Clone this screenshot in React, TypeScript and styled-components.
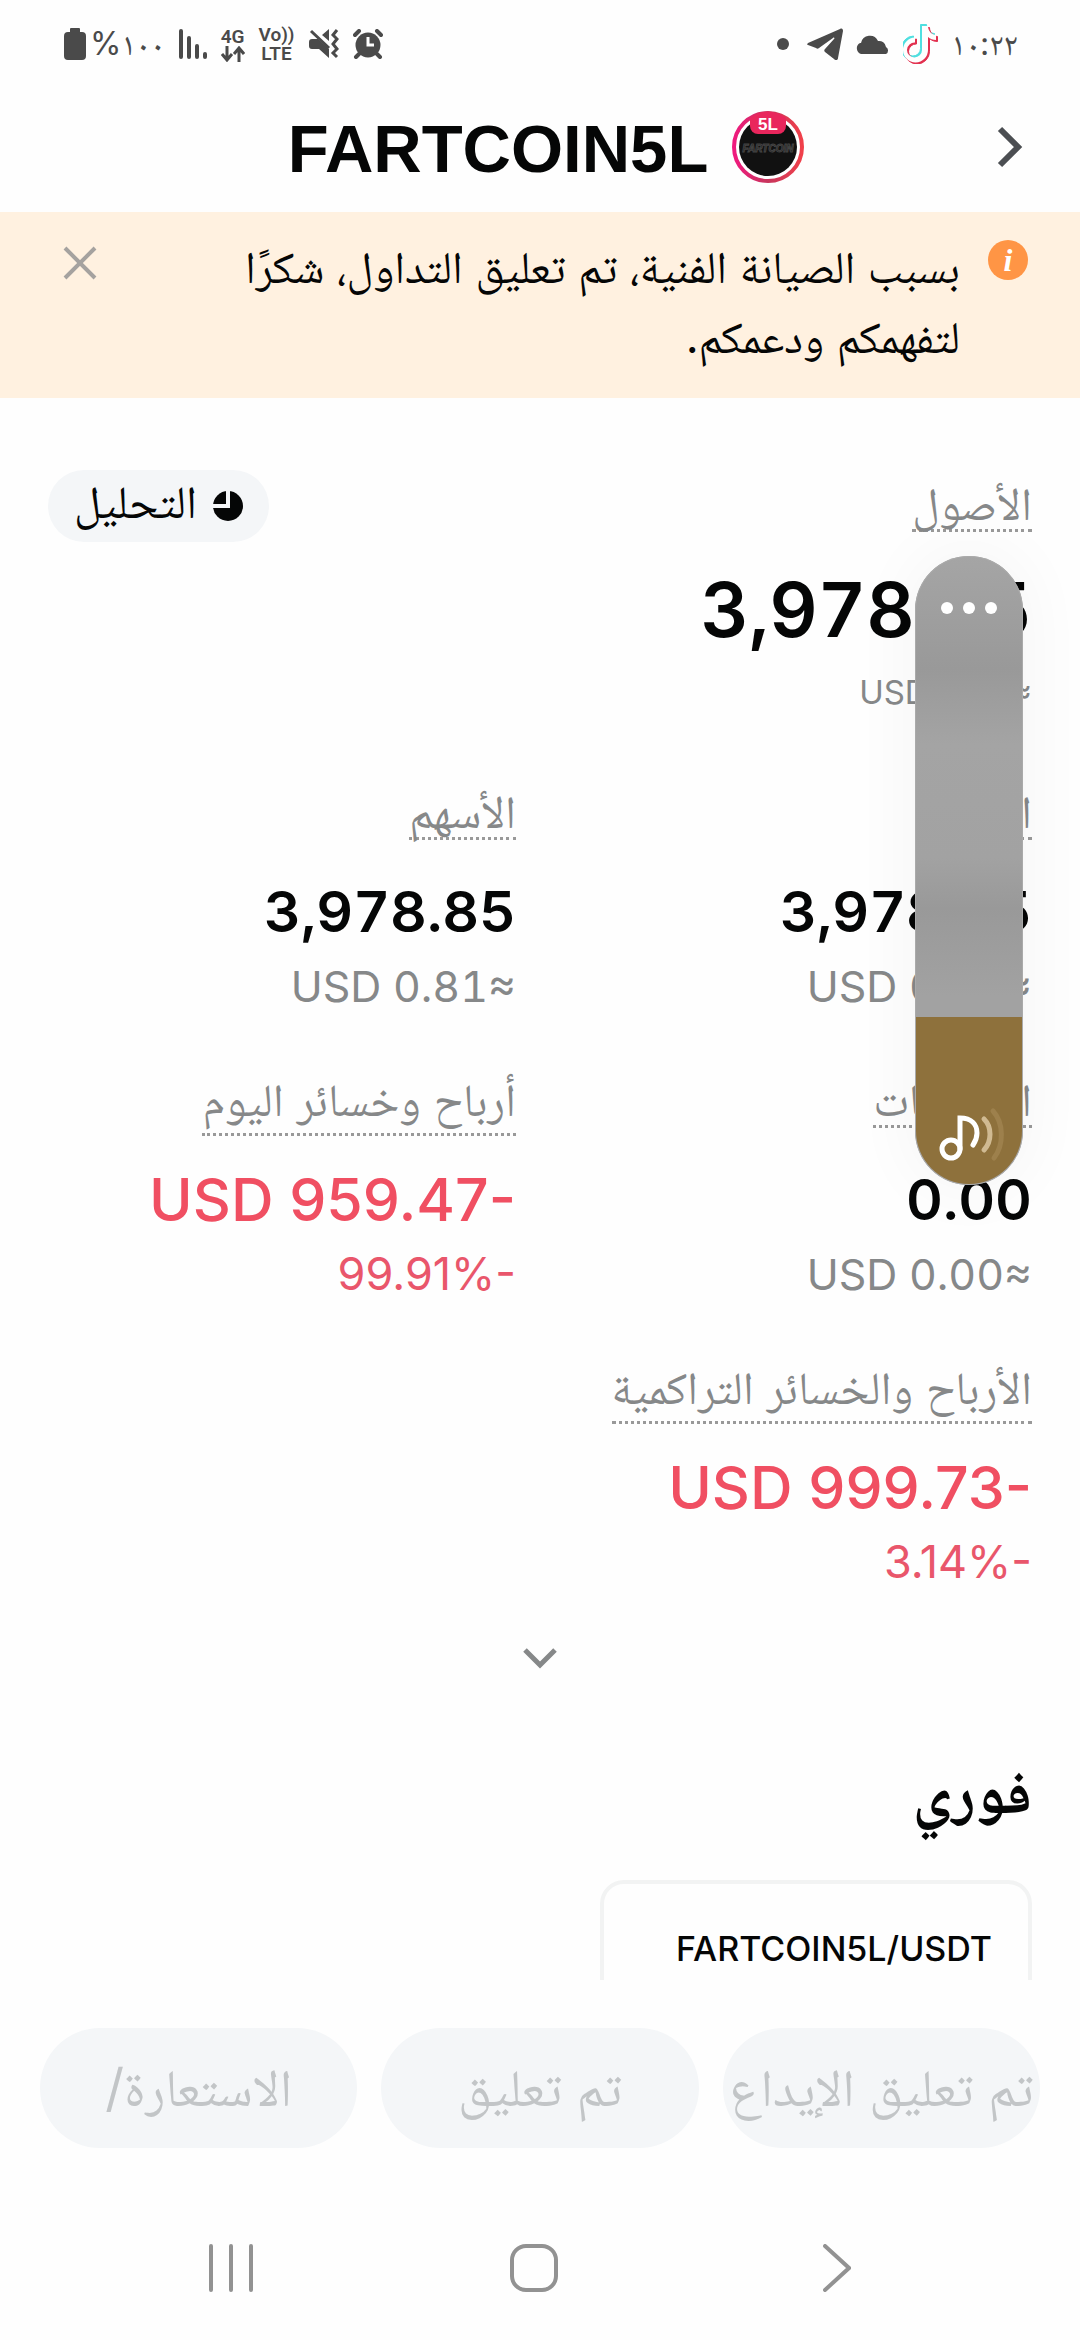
import React, { useState } from 'react';
import styled, { createGlobalStyle } from 'styled-components';

const GlobalStyle = createGlobalStyle`
  *, *::before, *::after { box-sizing: border-box; }
  body { margin: 0; background: #fefefe; }
  button, input { font: inherit; color: inherit; }
`;

const Shell = styled.div`
  position: relative;
  display: flex;
  flex-direction: column;
  height: 100vh;
  overflow: hidden;
  background: #fefefe;
  color: #050606;
  font-family: Inter, "Noto Naskh Arabic", "Noto Sans Arabic", "DejaVu Sans", sans-serif;
`;

const StatusBar = styled.div`
  display: flex;
  flex: none;
  justify-content: space-between;
  align-items: center;
  height: 88px;
  padding: 0 62px 0 64px;
  color: #4a4a4a;
`;

const StatusGroup = styled.div<{ $gap: number }>`
  display: flex;
  align-items: center;
  gap: ${(p) => p.$gap}px;
`;

const StatusText = styled.span`
  font-size: 32px;
  line-height: 40px;
`;

const Battery = styled.span`
  display: flex;
  align-items: center;
  gap: 4px;
`;

const Network = styled.span`
  display: flex;
  flex-direction: column;
  align-items: center;
  font-family: Roboto, sans-serif;
  font-size: 19px;
  font-weight: 600;
  line-height: 19px;
`;

const Header = styled.header`
  display: grid;
  grid-template-columns: 48px 1fr 60px;
  flex: none;
  align-items: center;
  height: 124px;
  padding: 0 46px 6px;
`;

const TitleGroup = styled.div`
  display: flex;
  align-items: center;
  justify-content: center;
  gap: 24px;
`;

const Title = styled.h1`
  margin: 0;
  padding-top: 4px;
  font-family: "Liberation Sans", Arial, sans-serif;
  font-size: 67px;
  font-weight: 700;
  line-height: 80px;
`;

const IconButton = styled.button`
  display: flex;
  align-items: center;
  justify-content: center;
  padding: 0;
  border: 0;
  background: none;
  cursor: pointer;
`;

const Notice = styled.section`
  display: flex;
  flex: none;
  align-items: flex-start;
  gap: 28px;
  height: 186px;
  padding: 20px 52px 0 60px;
  background: #fff1e0;
`;

const NoticeText = styled.p`
  flex: 1;
  margin: 0;
  padding-left: 80px;
  font-size: 45px;
  line-height: 70px;
`;

const NoticeIcon = styled.span`
  display: flex;
  padding-top: 8px;
`;

const NoticeClose = styled(IconButton)`
  width: 40px;
  height: 40px;
  margin-top: 11px;
`;

const Content = styled.main`
  flex: 1;
  min-height: 0;
  overflow: hidden;
  padding: 72px 48px 0;
`;

const TopRow = styled.div`
  display: flex;
  align-items: flex-start;
  justify-content: space-between;
`;

const Analysis = styled.button`
  display: flex;
  align-items: center;
  gap: 16px;
  height: 72px;
  padding: 0 26px;
  border: 0;
  border-radius: 36px;
  background: #f4f6f8;
`;

const AnalysisText = styled.span`
  padding-bottom: 10px;
  font-size: 46px;
  line-height: 60px;
`;

const Total = styled.div`
  display: flex;
  flex-direction: column;
  align-items: flex-start;
`;

const LabelBox = styled.div<{ $height: number }>`
  height: ${(p) => p.$height}px;
`;

const Label = styled.span<{ $tight?: boolean }>`
  display: block;
  width: fit-content;
  height: ${(p) => (p.$tight ? 62 : 70)}px;
  border-bottom: 3px dotted #999;
  color: #868889;
  font-size: 46px;
  line-height: 66px;
  white-space: nowrap;
`;

const TotalValue = styled.div`
  font-size: 75px;
  font-weight: 600;
  font-variant-numeric: tabular-nums;
  line-height: 120px;
`;

const TotalSub = styled.div`
  color: #868889;
  font-size: 33px;
  font-variant-numeric: tabular-nums;
  line-height: 44px;
`;

const Stats = styled.div`
  display: grid;
  grid-template-columns: 1fr 1fr;
  column-gap: 48px;
  row-gap: 48px;
  padding-top: 64px;
`;

const Stat = styled.div`
  height: 240px;
`;

const StatValue = styled.div<{ $loss?: boolean }>`
  width: fit-content;
  color: ${(p) => (p.$loss ? '#f04f62' : 'inherit')};
  font-size: ${(p) => (p.$loss ? 59 : 57)}px;
  font-weight: ${(p) => (p.$loss ? 500 : 600)};
  font-variant-numeric: ${(p) => (p.$loss ? 'normal' : 'tabular-nums')};
  line-height: 84px;
  white-space: nowrap;
`;

const StatSub = styled.div<{ $loss?: boolean }>`
  width: fit-content;
  color: ${(p) => (p.$loss ? '#e9566b' : '#868889')};
  font-size: ${(p) => (p.$loss ? 45 : 43)}px;
  font-variant-numeric: ${(p) => (p.$loss ? 'normal' : 'tabular-nums')};
  line-height: 64px;
`;

const Expand = styled(IconButton)`
  width: 48px;
  height: 48px;
  margin: 40px auto 0;
`;

const SectionTitle = styled.h2`
  margin: 62px 0 0;
  font-size: 62px;
  font-weight: 700;
  line-height: 96px;
`;

const Pair = styled.article`
  width: 432px;
  height: 240px;
  margin-top: 40px;
  padding: 40px 36px;
  border: 4px solid #f2f3f3;
  border-radius: 24px;
  font-size: 34px;
  font-weight: 500;
  line-height: 50px;
`;

const Actions = styled.footer`
  display: grid;
  grid-template-columns: repeat(3, 1fr);
  flex: none;
  gap: 24px;
  padding: 48px 40px;
`;

const Action = styled.button`
  height: 120px;
  padding: 0;
  border: 0;
  border-radius: 60px;
  background: #f4f6f8;
  color: #c2c5c7;
  font-size: 52px;
  line-height: 80px;
  white-space: nowrap;
`;

const NavBar = styled.nav`
  display: grid;
  grid-template-columns: repeat(3, 1fr);
  flex: none;
  height: 144px;
  padding: 0 92px 0 80px;
`;

const Volume = styled.div`
  position: absolute;
  top: 556px;
  right: 57px;
  display: flex;
  flex-direction: column;
  align-items: center;
  justify-content: space-between;
  width: 108px;
  height: 629px;
  overflow: hidden;
  border-radius: 54px;
  background: linear-gradient(#a5a5a5, #999 18%, #a4a4a4 30%, #a2a2a2 48%, #999 56%, #a2a2a2 70%);
  box-shadow: 0 0 60px 12px rgba(0, 0, 0, 0.03), inset 0 0 0 1px #aaa;
`;

const VolumeFill = styled.div`
  position: absolute;
  right: 1px;
  bottom: 1px;
  left: 1px;
  background: #8e713c;
  border-radius: 0 0 53px 53px;
`;

const VolumeRange = styled.input`
  position: absolute;
  inset: 0;
  width: 108px;
  height: 629px;
  margin: 0;
  opacity: 0;
  writing-mode: vertical-lr;
  direction: rtl;
`;

const VolumeMore = styled(IconButton)`
  position: relative;
  width: 108px;
  height: 104px;
`;

const VolumeNote = styled.svg`
  position: relative;
  margin-bottom: 22px;
  pointer-events: none;
`;

type StatData = { label: string; value: string; sub: string; loss?: boolean; tight?: boolean };

const stats: StatData[] = [
  { label: 'الرصيد', value: '3,978.85', sub: 'USD 0.81≈', tight: true },
  { label: 'الأسهم', value: '3,978.85', sub: 'USD 0.81≈', tight: true },
  { label: 'الالتزامات', value: '0.00', sub: 'USD 0.00≈', tight: true },
  { label: 'أرباح وخسائر اليوم', value: 'USD 959.47-', sub: '99.91%-', loss: true },
  { label: 'الأرباح والخسائر التراكمية', value: 'USD 999.73-', sub: '3.14%-', loss: true },
];

const actions = ['تم تعليق الإيداع', 'تم تعليق', 'الاستعارة/'];

function BatteryIcon() {
  return (
    <svg width="22" height="32" viewBox="0 0 22 32" fill="currentColor">
      <path d="M7 0h8a1 1 0 0 1 1 1v3h2a4 4 0 0 1 4 4v20a4 4 0 0 1-4 4H4a4 4 0 0 1-4-4V8a4 4 0 0 1 4-4h2V1a1 1 0 0 1 1-1z" />
    </svg>
  );
}

function SignalIcon() {
  return (
    <svg width="28" height="30" viewBox="0 0 28 30" stroke="currentColor" strokeWidth="4" strokeLinecap="round">
      <path d="M2 2v26M10 9v19M18 17v11M26 25v3" />
    </svg>
  );
}

function DataArrows() {
  return (
    <svg width="24" height="16" viewBox="0 0 24 16" fill="none" stroke="currentColor" strokeWidth="3">
      <path d="M6 0v14M1 8l5 6 5-6M18 16V2M13 8l5-6 5 6" />
    </svg>
  );
}

function MuteIcon() {
  return (
    <svg width="30" height="30" viewBox="0 0 30 30">
      <path fill="currentColor" d="M0 13a3 3 0 0 1 3-3h6l11 10v9l-10-9H3a3 3 0 0 1-3-3zM13 6l7-6v12z" />
      <path fill="none" stroke="currentColor" strokeWidth="3" d="M2 2l18 17M28 1l-4 5 4 4-4 5 4 5-4 4 4 4" />
    </svg>
  );
}

function AlarmIcon() {
  return (
    <svg width="30" height="30" viewBox="0 0 30 30">
      <circle cx="15" cy="16" r="12.500" fill="currentColor" />
      <path fill="none" stroke="currentColor" strokeWidth="4" strokeLinecap="round" d="M2 6l4-4M28 6l-4-4M6 25l-3 3M24 25l3 3" />
      <path fill="none" stroke="#fefefe" strokeWidth="3" d="M15 8v8h6" />
    </svg>
  );
}

function DotIcon() {
  return (
    <svg width="18" height="12" viewBox="0 0 18 12" fill="currentColor">
      <circle cx="6" cy="6" r="6" />
    </svg>
  );
}

function TelegramIcon() {
  return (
    <svg width="36" height="32" viewBox="0 0 36 32" fill="currentColor">
      <path d="M1 15 33 1c2-1 3 0 3 2l-5 27c0 2-2 3-4 1l-9-7c-1-1-1-2 0-3l9-10c1-1 0-2-1-1L12 20c-1 1-2 1-3 0l-8-3c-1 0-1-1 0-2z" />
    </svg>
  );
}

function CloudIcon() {
  return (
    <svg width="36" height="20" viewBox="0 0 36 20" fill="currentColor">
      <path d="M6 20a6 6 0 0 1-1-11h1a9 9 0 0 1 17-2 7 7 0 0 1 8 6 4 4 0 0 1 0 7z" />
    </svg>
  );
}

function TikTokIcon() {
  const note = 'M19 2v24a7.500 7.500 0 1 1-7-7.500v-5A12.500 12.500 0 1 0 25 26V13c2 2 5 3 8 3v-5c-4 0-8-4-8-9z';
  return (
    <svg width="36" height="40" viewBox="0 0 36 40">
      <path d={note} fill="#4fdfe0" stroke="#4fdfe0" transform="translate(-1.500 -1.500)" />
      <path d={note} fill="#e2304f" stroke="#e2304f" transform="translate(1.500 1.500)" />
      <path d={note} fill="#fefefe" />
    </svg>
  );
}

function CoinLogo() {
  return (
    <svg width="72" height="74" viewBox="0 0 72 74">
      <defs>
        <linearGradient id="ring">
          <stop offset="0" stopColor="#ef1a7e" />
          <stop offset="0.500" stopColor="#c7355c" />
          <stop offset="1" stopColor="#f0404a" />
        </linearGradient>
      </defs>
      <circle cx="36" cy="37" r="34" fill="#fff" stroke="url(#ring)" strokeWidth="4" />
      <circle cx="36" cy="37" r="29" fill="#111" />
      <text x="36" y="42" textAnchor="middle" fill="none" stroke="#444" strokeWidth="1" fontSize="10" fontStyle="italic" fontWeight="700" fontFamily="Liberation Sans, sans-serif">FARTCOIN</text>
      <path d="M18 8Q36-5 54 8v8a8 8 0 0 1-8 8H26a8 8 0 0 1-8-8z" fill="#e9265c" />
      <text x="36" y="20" textAnchor="middle" fill="#fff" fontSize="17" fontWeight="700" fontFamily="Liberation Sans, sans-serif">5L</text>
    </svg>
  );
}

function PieIcon() {
  return (
    <svg width="30" height="30" viewBox="0 0 30 30">
      <circle cx="15" cy="15" r="15" fill="#050606" />
      <path d="M15 0v15H0" fill="none" stroke="#f4f6f8" strokeWidth="4" />
    </svg>
  );
}

export default function App() {
  const [level, setLevel] = useState(26.5);

  return (
    <>
      <GlobalStyle />
      <Shell dir="rtl" lang="ar">
        <StatusBar dir="ltr">
          <StatusGroup $gap={14}>
            <Battery>
              <BatteryIcon />
              <StatusText>%١٠٠</StatusText>
            </Battery>
            <SignalIcon />
            <Network>
              4G
              <DataArrows />
            </Network>
            <Network>
              <span>Vo))</span>
              <span>LTE</span>
            </Network>
            <MuteIcon />
            <AlarmIcon />
          </StatusGroup>
          <StatusGroup $gap={12}>
            <DotIcon />
            <TelegramIcon />
            <CloudIcon />
            <TikTokIcon />
            <StatusText>١٠:٢٢</StatusText>
          </StatusGroup>
        </StatusBar>

        <Header>
          <IconButton aria-label="رجوع">
            <svg width="26" height="42" viewBox="0 0 26 42" fill="none" stroke="#4b4e52" strokeWidth="6">
              <path d="M3 3l18 18L3 39" />
            </svg>
          </IconButton>
          <TitleGroup>
            <CoinLogo />
            <Title>FARTCOIN5L</Title>
          </TitleGroup>
        </Header>

        <Notice>
          <NoticeIcon>
            <svg width="40" height="40" viewBox="0 0 40 40">
              <circle cx="20" cy="20" r="20" fill="#ff9545" />
              <text x="20" y="31" textAnchor="middle" fill="#fff" fontSize="32" fontStyle="italic" fontWeight="700" fontFamily="Liberation Serif, serif">i</text>
            </svg>
          </NoticeIcon>
          <NoticeText>بسبب الصيانة الفنية، تم تعليق التداول، شكرًا لتفهمكم ودعمكم.</NoticeText>
          <NoticeClose aria-label="إغلاق">
            <svg width="34" height="34" viewBox="0 0 34 34" stroke="#a5a29f" strokeWidth="4">
              <path d="M2 2l30 30M32 2L2 32" />
            </svg>
          </NoticeClose>
        </Notice>

        <Content>
          <TopRow>
            <Total>
              <LabelBox $height={80}>
                <Label $tight>الأصول</Label>
              </LabelBox>
              <TotalValue dir="ltr">3,978.85</TotalValue>
              <TotalSub dir="ltr">USD 0.81≈</TotalSub>
            </Total>
            <Analysis>
              <PieIcon />
              <AnalysisText>التحليل</AnalysisText>
            </Analysis>
          </TopRow>

          <Stats>
            {stats.map((s) => (
              <Stat key={s.label}>
                <LabelBox $height={92}>
                  <Label $tight={s.tight}>{s.label}</Label>
                </LabelBox>
                <StatValue dir="ltr" $loss={s.loss}>{s.value}</StatValue>
                <StatSub dir="ltr" $loss={s.loss}>{s.sub}</StatSub>
              </Stat>
            ))}
          </Stats>

          <Expand aria-label="عرض المزيد">
            <svg width="34" height="22" viewBox="0 0 34 22" fill="none" stroke="#868889" strokeWidth="5">
              <path d="M2 3l15 15L32 3" />
            </svg>
          </Expand>

          <SectionTitle>فوري</SectionTitle>
          <Pair>FARTCOIN5L/USDT</Pair>
        </Content>

        <Actions>
          {actions.map((a) => (
            <Action key={a}>{a}</Action>
          ))}
        </Actions>

        <NavBar dir="ltr">
          <IconButton aria-label="التطبيقات الأخيرة">
            <svg width="46" height="48" viewBox="0 0 46 48" stroke="#929292" strokeWidth="4" strokeLinecap="round">
              <path d="M3 2v44M23 2v44M43 2v44" />
            </svg>
          </IconButton>
          <IconButton aria-label="الرئيسية">
            <svg width="48" height="48" viewBox="0 0 48 48" fill="none" stroke="#929292" strokeWidth="4">
              <rect x="2" y="2" width="44" height="44" rx="14" />
            </svg>
          </IconButton>
          <IconButton aria-label="رجوع">
            <svg width="28" height="48" viewBox="0 0 28 48" fill="none" stroke="#929292" strokeWidth="4" strokeLinecap="round">
              <path d="M2 2l24 22L2 46" />
            </svg>
          </IconButton>
        </NavBar>

        <Volume>
          <VolumeFill style={{ height: `${level}%` }} />
          <VolumeRange
            type="range"
            step="0.5"
            aria-label="مستوى الصوت"
            value={level}
            onChange={(e) => setLevel(Number(e.target.value))}
          />
          <VolumeMore aria-label="المزيد">
            <svg width="56" height="12" viewBox="0 0 56 12" fill="#fff">
              <circle cx="6" cy="6" r="6" />
              <circle cx="28" cy="6" r="6" />
              <circle cx="50" cy="6" r="6" />
            </svg>
          </VolumeMore>
          <VolumeNote width="72" height="56" viewBox="-6 0 72 56" fill="none" strokeWidth="5" strokeLinecap="round">
            <circle cx="12" cy="42" r="9" stroke="#fff" />
            <path d="M21 42V11c12 0 17 7 17 15 0 6-2 9-4 12" stroke="#fff" />
            <path d="M45 12c8 8 8 22 0 31" stroke="#d0ba92" />
            <path d="M54 4c11 12 11 34 1 47" stroke="#9d804c" />
          </VolumeNote>
        </Volume>
      </Shell>
    </>
  );
}
